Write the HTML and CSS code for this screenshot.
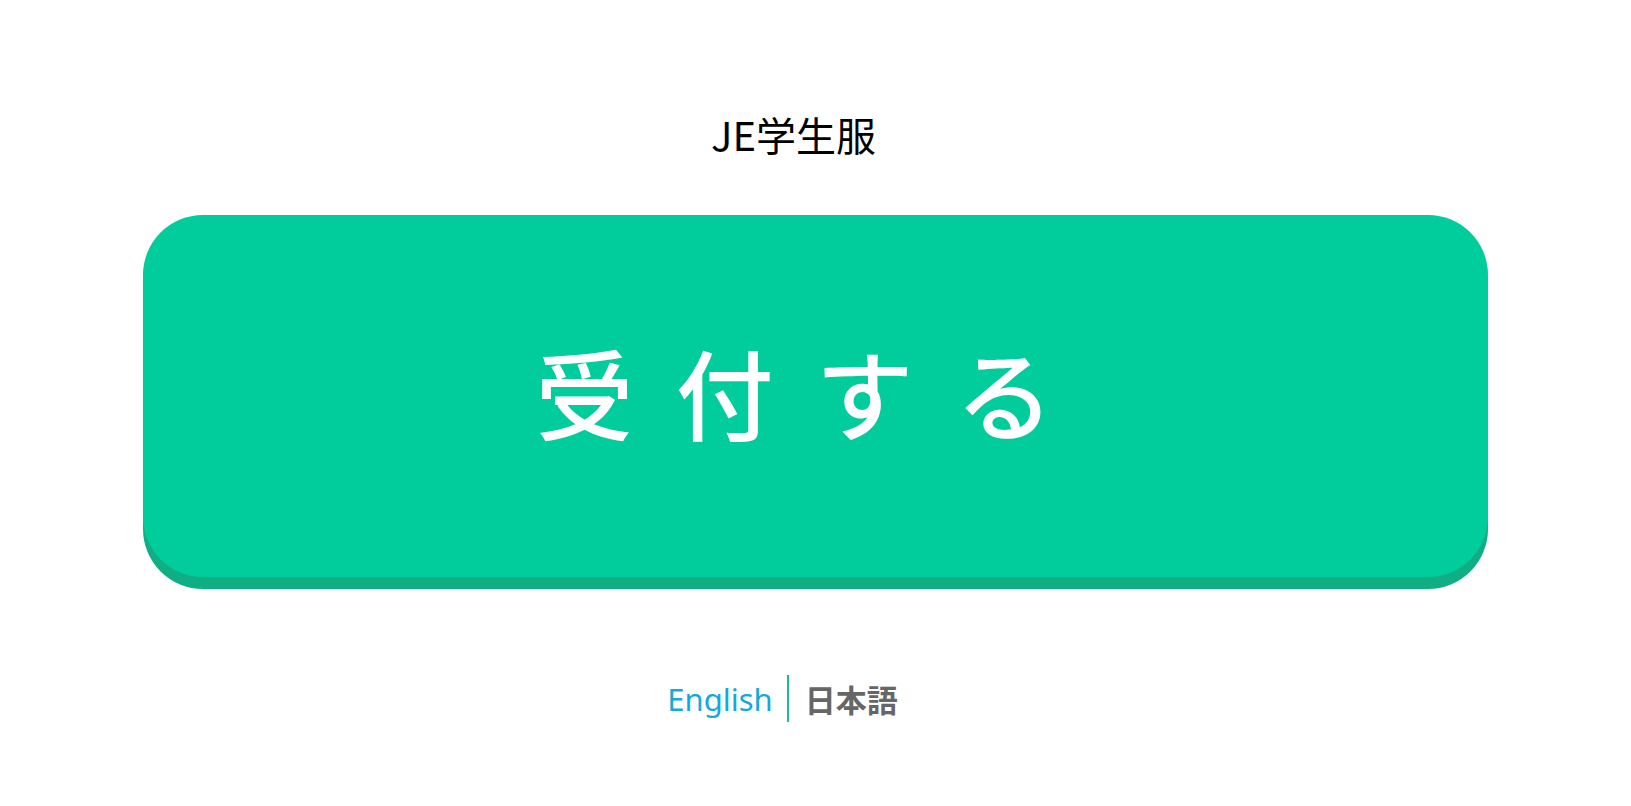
FILE: index.html
```html
<!DOCTYPE html>
<html lang="ja">
<head>
<meta charset="utf-8">
<title>JE学生服</title>
<link rel="stylesheet" href="styles.css">
</head>
<body>
<div class="page">
  <h1 class="title">JE学生服</h1>
  <button class="reception">受付する</button>
  <div class="lang">
    <a class="lang-en">English</a>
    <span class="lang-sep"></span>
    <span class="lang-ja">日本語</span>
  </div>
</div>
</body>
</html>
```
FILE: styles.css
```css
html, body {
  margin: 0;
  padding: 0;
  background: #ffffff;
}
.page {
  display: flex;
  flex-direction: column;
  align-items: center;
  padding: 114px 143px 0;
  font-family: "Noto Sans", "Noto Sans CJK JP", sans-serif;
}
.title {
  margin: 0;
  font-family: "Noto Sans CJK JP", sans-serif;
  font-weight: 400;
  font-size: 40px;
  line-height: 40px;
  color: #000;
  margin-right: 44px;
}
.reception {
  margin-top: 61px;
  width: 100%;
  height: 362px;
  border: none;
  border-radius: 60px;
  background: #00cc9c;
  box-shadow: 0 12px 0 #10ae85;
  color: #ffffff;
  font-family: "Noto Sans CJK JP", sans-serif;
  font-weight: 500;
  font-size: 98px;
  letter-spacing: 42px;
  padding: 0 0 12px 0;
  cursor: pointer;
}
.lang {
  margin-top: 98px;
  display: flex;
  align-items: center;
  height: 47px;
  margin-right: 66px;
}
.lang-en {
  color: #13a9dc;
  font-size: 31px;
  font-family: "Noto Sans", sans-serif;
  padding-right: 14px;
}
.lang-sep {
  width: 2px;
  align-self: stretch;
  background: #1dbb8f;
}
.lang-ja {
  color: #666666;
  font-size: 31px;
  font-weight: 700;
  font-family: "Noto Sans CJK JP", sans-serif;
  padding-left: 16px;
}
```
